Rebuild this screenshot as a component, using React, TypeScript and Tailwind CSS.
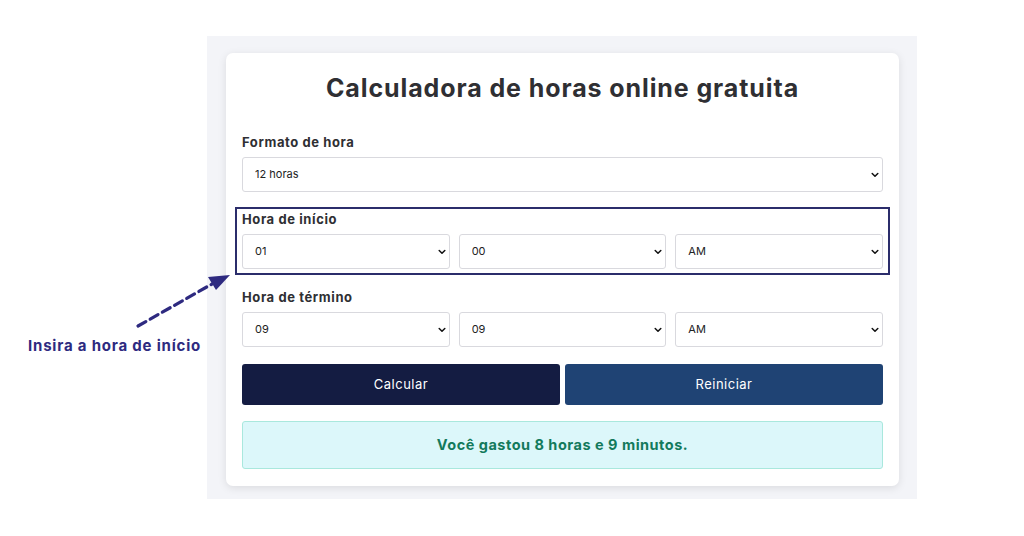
import type { ReactNode } from 'react'

const hours = ['01', '02', '03', '04', '05', '06', '07', '08', '09', '10', '11', '12']
const minutes = Array.from({ length: 60 }, (_, i) => String(i).padStart(2, '0'))

function Chevron() {
  return (
    <svg
      viewBox="0 0 10 6"
      className="pointer-events-none absolute right-[4px] top-1/2 h-[6px] w-[8px] -translate-y-1/2"
      fill="none"
      stroke="#111"
      strokeWidth="1.9"
      strokeLinecap="round"
      strokeLinejoin="round"
    >
      <path d="M1.5 1.2 5 4.6 8.5 1.2" />
    </svg>
  )
}

function Select({ value, options }: { value: string; options: string[] }) {
  return (
    <div className="relative">
      <select
        defaultValue={value}
        className="block h-[35px] w-full appearance-none rounded-[3px] border border-[#d9d9de] bg-white pl-[12px] pr-6 text-[11px] text-[#222] outline-none"
      >
        {options.map((option) => (
          <option key={option} value={option}>
            {option}
          </option>
        ))}
      </select>
      <Chevron />
    </div>
  )
}

function Label({ children }: { children: ReactNode }) {
  return (
    <p className="mb-[7px] text-[13px] font-bold leading-4 tracking-[0.6px] text-[#2f2f33]">
      {children}
    </p>
  )
}

export default function App() {
  return (
    <div className="relative min-h-[536px] w-[1024px] bg-white font-['Inter',sans-serif]">
      <div className="absolute left-[28px] top-[335px] text-[15px] font-bold tracking-[0.8px] text-[#2e2a80]">
        Insira a hora de início
      </div>
      <svg
        className="absolute left-[130px] top-[268px]"
        width="110"
        height="70"
        viewBox="0 0 110 70"
        fill="none"
      >
        <path
          d="M8 58 L82 16"
          stroke="#2e2a80"
          strokeWidth="3.2"
          strokeDasharray="9 5"
          strokeLinecap="round"
        />
        <path d="M100 7 L78 9 L86 22 Z" fill="#2e2a80" />
      </svg>

      <div className="ml-[207px] mt-[36px] inline-block w-[710px] bg-[#f3f4f8] pb-[13px] pl-[19px] pr-[18px] pt-[17px] align-top">
        <div className="rounded-[7px] bg-white px-[16px] pb-[17px] pt-[20px] shadow-[0_2px_8px_rgba(0,0,0,0.1)]">
          <h1 className="mb-[31px] text-center text-[25px] font-bold leading-[30px] tracking-[0.9px] text-[#2f2f33]">
            Calculadora de horas online gratuita
          </h1>

          <Label>Formato de hora</Label>
          <Select value="12 horas" options={['12 horas', '24 horas']} />

          <div className="-mx-[7px] mt-[15px] border-2 border-[#2b2d6b] px-[5px] pb-[4px] pt-[2px]">
            <Label>Hora de início</Label>
            <div className="grid grid-cols-3 gap-[9px]">
              <Select value="01" options={hours} />
              <Select value="00" options={minutes} />
              <Select value="AM" options={['AM', 'PM']} />
            </div>
          </div>

          <div className="mt-[14px]">
            <Label>Hora de término</Label>
            <div className="grid grid-cols-3 gap-[9px]">
              <Select value="09" options={hours} />
              <Select value="09" options={minutes} />
              <Select value="AM" options={['AM', 'PM']} />
            </div>
          </div>

          <div className="mt-[17px] grid grid-cols-2 gap-[5px]">
            <button
              type="button"
              className="h-[41px] rounded-[3px] bg-[#141c42] text-[13px] tracking-[0.5px] text-white"
            >
              Calcular
            </button>
            <button
              type="button"
              className="h-[41px] rounded-[3px] bg-[#1f4374] text-[13px] tracking-[0.5px] text-white"
            >
              Reiniciar
            </button>
          </div>

          <div className="mt-[16px] flex h-[48px] items-center justify-center rounded-[3px] border border-[#a9e8dd] bg-[#dcf7fa] text-[14.5px] font-bold tracking-[0.5px] text-[#137a5c]">
            Você gastou 8 horas e 9 minutos.
          </div>
        </div>
      </div>
    </div>
  )
}
